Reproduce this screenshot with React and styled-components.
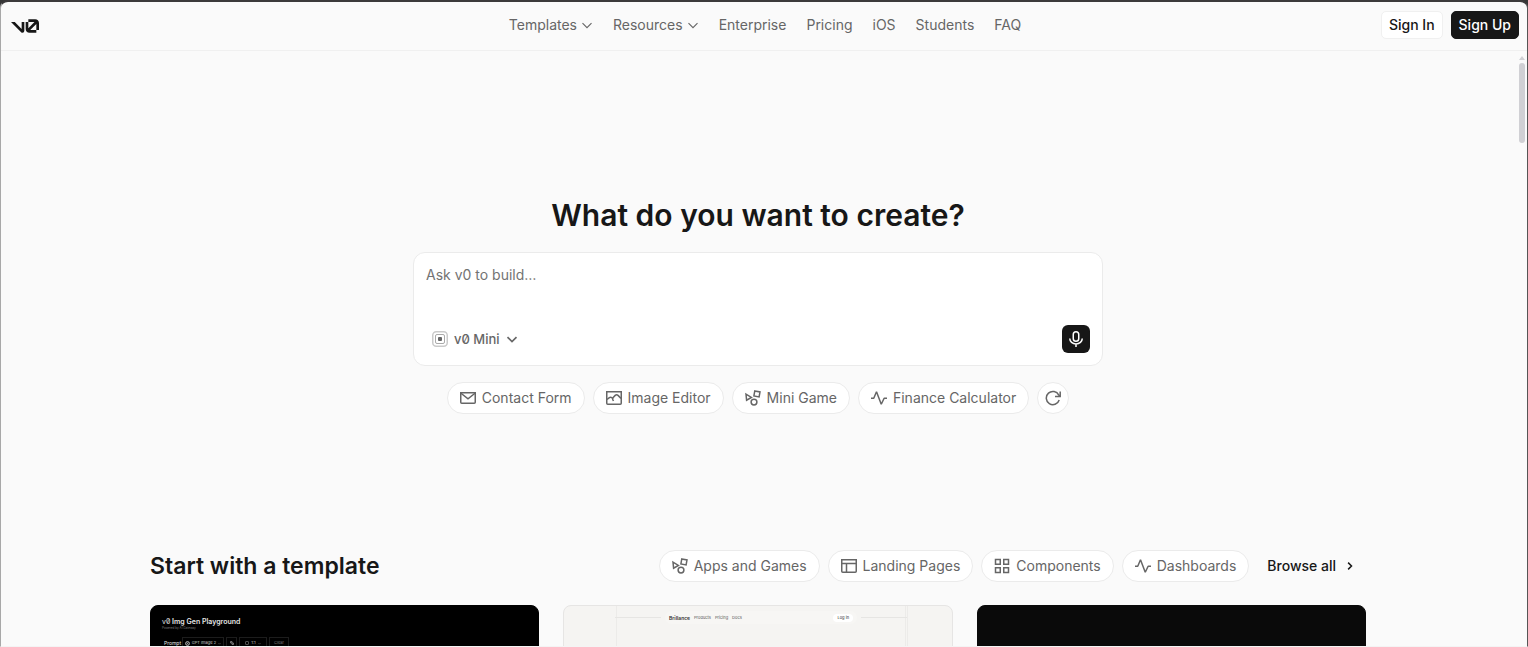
import React from 'react';
import styled, { createGlobalStyle } from 'styled-components';

const navItems = [
  { label: 'Templates', menu: true },
  { label: 'Resources', menu: true },
  { label: 'Enterprise' },
  { label: 'Pricing' },
  { label: 'iOS' },
  { label: 'Students' },
  { label: 'FAQ' },
];

const Icon = ({ size = 16, width = 1.5, children }) => (
  <svg
    width={size}
    height={size}
    viewBox="0 0 16 16"
    fill="none"
    stroke="currentColor"
    strokeWidth={width}
    aria-hidden="true"
  >
    {children}
  </svg>
);

const Logo = () => (
  <svg width="28" height="14" viewBox="0 0 147 70" fill="currentColor" aria-hidden="true">
    <path d="M56 50.2V14h14v46.16A9.84 9.84 0 0 1 60.16 70c-2.6 0-5.16-1-7-2.84L0 14h19.8L56 50.2Z" />
    <path d="M147 56h-14V23.95L100.95 56H133v14H96.69C85.81 70 77 61.19 77 50.31V14h14v32.16L123.16 14H91V0h36.31C138.19 0 147 8.81 147 19.69V56Z" />
  </svg>
);

const MailIcon = () => (
  <Icon>
    <path d="M.75 2.75h14.5v9.5a1 1 0 0 1-1 1H1.75a1 1 0 0 1-1-1v-9.5Z" />
    <path d="m1 3.25 7 5.5 7-5.5" />
  </Icon>
);

const ImageIcon = () => (
  <Icon>
    <path d="M.75 1.75h14.5v11.5a1 1 0 0 1-1 1H1.75a1 1 0 0 1-1-1V1.75Z" />
    <path d="M1 9.5 3.4 7.6a2 2 0 0 1 2.4 0L7 8.6" />
    <path d="M7.5 11 6.8 9.6a2 2 0 0 1 .4-2.2l2-2a2 2 0 0 1 2.8 0l3 3" />
  </Icon>
);

const ShapesIcon = () => (
  <Icon>
    <path d="m1 4.2.6 6 4.8-2.8L1 4.2Z" />
    <path d="m9.8.9 5.2 1-.9 5-5.2-1 .9-5Z" />
    <circle cx="9" cy="12.1" r="2.9" />
  </Icon>
);

const PulseIcon = () => (
  <Icon>
    <path d="M0 8.25h2.75L5.5 1.75l4.75 12.5 2.9-6H16" strokeLinejoin="bevel" />
  </Icon>
);

const ReloadIcon = () => (
  <Icon>
    <path d="M14.2 10a6.6 6.6 0 1 1-.4-4.9l1 1.1" />
    <path d="M15.2 1.4v5.1H10" />
  </Icon>
);

const LayoutIcon = () => (
  <Icon>
    <path d="M.75 1.75h14.5v11.5a1 1 0 0 1-1 1H1.75a1 1 0 0 1-1-1V1.75ZM1 5.5h14M5.5 5.5V14" />
  </Icon>
);

const GridIcon = () => (
  <Icon>
    <path d="M1.5 1.5h4.75v4.75H1.5zM9.75 1.5h4.75v4.75H9.75zM1.5 9.75h4.75v4.75H1.5zM9.75 9.75h4.75v4.75H9.75z" />
  </Icon>
);

const ModelIcon = () => (
  <Icon width={1}>
    <rect x=".75" y=".75" width="14.5" height="14.5" rx="3.5" strokeWidth="1.5" opacity=".35" />
    <rect x="3.5" y="3.5" width="9" height="9" rx="1.5" opacity=".55" />
    <rect x="6" y="6" width="4" height="4" rx="1" fill="currentColor" stroke="none" />
  </Icon>
);

const MicIcon = () => (
  <Icon>
    <rect x="5.25" y=".75" width="5.5" height="9.5" rx="2.75" />
    <path d="M1.75 7.5a6.25 5.5 0 0 0 12.5 0M8 13v3" />
  </Icon>
);

const ChevronDown = ({ size = 12, width = 1.5 }) => (
  <Icon size={size} width={width}>
    <path d="m2 5.5 6 6 6-6" />
  </Icon>
);

const ChevronRight = () => (
  <Icon size={12} width={2}>
    <path d="m5.5 3.5 4.5 4.5-4.5 4.5" />
  </Icon>
);

const prompts = [
  { label: 'Contact Form', icon: MailIcon },
  { label: 'Image Editor', icon: ImageIcon },
  { label: 'Mini Game', icon: ShapesIcon },
  { label: 'Finance Calculator', icon: PulseIcon },
];

const categories = [
  { label: 'Apps and Games', icon: ShapesIcon },
  { label: 'Landing Pages', icon: LayoutIcon },
  { label: 'Components', icon: GridIcon },
  { label: 'Dashboards', icon: PulseIcon },
];

const App = () => {
  return (
    <>
      <GlobalStyle />
      <Window>
        <Header>
          <LogoLink href="#" aria-label="v0">
            <Logo />
          </LogoLink>
          <Nav>
            {navItems.map((item) =>
              item.menu ? (
                <NavButton key={item.label} type="button">
                  {item.label}
                  <ChevronDown />
                </NavButton>
              ) : (
                <NavLink key={item.label} href="#">{item.label}</NavLink>
              )
            )}
          </Nav>
          <Account>
            <AccountButton type="button">Sign In</AccountButton>
            <AccountButton type="button" $dark>Sign Up</AccountButton>
          </Account>
        </Header>

        <Content>
          <Hero>
            <Title>What do you want to create?</Title>
            <PromptBox>
              <PromptInput aria-label="Prompt" placeholder="Ask v0 to build…" />
              <PromptBar>
                <ModelButton type="button">
                  <ModelIcon />
                  v0 Mini
                  <ChevronDown width={2.2} />
                </ModelButton>
                <MicButton type="button" aria-label="Dictate">
                  <MicIcon />
                </MicButton>
              </PromptBar>
            </PromptBox>
            <Pills>
              {prompts.map(({ label, icon: PillIcon }) => (
                <Pill key={label} type="button">
                  <PillIcon />
                  {label}
                </Pill>
              ))}
              <RoundButton type="button" aria-label="Refresh">
                <ReloadIcon />
              </RoundButton>
            </Pills>
          </Hero>

          <Templates>
            <TemplatesHead>
              <Subtitle>Start with a template</Subtitle>
              <Pills>
                {categories.map(({ label, icon: PillIcon }) => (
                  <Pill key={label} type="button">
                    <PillIcon />
                    {label}
                  </Pill>
                ))}
                <BrowseLink href="#">
                  Browse all
                  <ChevronRight />
                </BrowseLink>
              </Pills>
            </TemplatesHead>
            <Cards>
              <Card $bg="#000000">
                <Playground>
                  <PlayTitle><span>v0</span> Img Gen Playground</PlayTitle>
                  <PlayNote>Powered by AI Gateway</PlayNote>
                  <PlayBar>
                    <PlayLabel>Prompt</PlayLabel>
                    <PlayChip $w={42}>
                      <Icon size={5} width={3}><circle cx="8" cy="8" r="6" /><circle cx="8" cy="8" r="1" /></Icon>
                      GPT Image 2
                      <ChevronDown size={3} />
                    </PlayChip>
                    <PlayChip $w={11}>
                      <Icon size={4} width={2}><path d="M2 2h6v6H2zM8 8h6v6H8z" /></Icon>
                    </PlayChip>
                    <PlayChip $w={28}>
                      <Icon size={4}><rect x="2" y="2" width="12" height="12" rx="2" /></Icon>
                      1:1
                      <ChevronDown size={3} />
                    </PlayChip>
                    <PlayChip $w={20} $dim>Clear</PlayChip>
                  </PlayBar>
                </Playground>
              </Card>
              <Card $bg="#f5f4f2" $border="#e6e5e4">
                <Landing>
                  <Rule />
                  <LandingNav>
                    <Brand>Brillance</Brand>
                    <span>Products</span>
                    <span>Pricing</span>
                    <span>Docs</span>
                    <LoginTag>Log in</LoginTag>
                  </LandingNav>
                  <Rule />
                </Landing>
              </Card>
              <Card $bg="#0a0a0a" />
            </Cards>
          </Templates>
        </Content>
        <Scrollbar>
          <ScrollArrow />
          <ScrollThumb />
        </Scrollbar>
      </Window>
    </>
  );
};

export default App;

const GlobalStyle = createGlobalStyle`
  * {
    box-sizing: border-box;
  }

  body {
    margin: 0;
    background: #363636;
    font-family: Inter, 'Liberation Sans', sans-serif;
    font-size: 14px;
    line-height: 20px;
    color: #171717;
  }

  button, textarea {
    font: inherit;
    color: inherit;
    margin: 0;
    padding: 0;
    border: 0;
    background: none;
  }

  a {
    color: inherit;
    text-decoration: none;
  }

  h1, h2, p {
    margin: 0;
  }

  svg {
    flex-shrink: 0;
  }
`;

const Window = styled.div`
  position: relative;
  height: 100vh;
  overflow: hidden;
  background: #fafafa;
  border: 1px solid #a8a8a8;
  border-top: 2px solid #3c3a3b;
  border-right-color: #555555;
  border-bottom-color: #f4f4f4;
  border-radius: 8px 8px 0 0;
`;

const Header = styled.header`
  display: grid;
  grid-template-columns: 1fr auto 1fr;
  align-items: center;
  height: 49px;
  padding: 0 8px 2px 10px;
  border-bottom: 1px solid #f0f0f0;
`;

const LogoLink = styled.a`
  display: flex;
  padding-top: 2px;
`;

const Nav = styled.nav`
  display: flex;
  gap: 20px;
  color: #666666;
`;

const NavLink = styled.a`
  white-space: nowrap;
`;

const NavButton = styled.button`
  display: flex;
  align-items: center;
  gap: 4px;
`;

const Account = styled.div`
  display: flex;
  justify-content: flex-end;
  gap: 8px;
`;

const AccountButton = styled.button`
  height: 28px;
  padding: 0 7px;
  border: 1px solid ${(props) => (props.$dark ? '#171717' : '#f0f0f0')};
  border-radius: 5px;
  background: ${(props) => (props.$dark ? '#171717' : '#ffffff')};
  color: ${(props) => (props.$dark ? '#ffffff' : '#171717')};
  font-weight: 500;
  line-height: 18px;
`;

const Content = styled.main`
  display: flex;
  flex-direction: column;
  align-items: center;
  padding: 144px 12px 0 0;
`;

const Hero = styled.section`
  display: flex;
  flex-direction: column;
  align-items: center;
  width: 100%;
  max-width: 690px;
`;

const Title = styled.h1`
  font-size: 30px;
  line-height: 40px;
  font-weight: 600;
  margin-bottom: 17px;
`;

const PromptBox = styled.div`
  width: 100%;
  padding: 12px;
  margin-bottom: 16px;
  background: #ffffff;
  border: 1px solid #ebebeb;
  border-radius: 12px;
`;

const PromptInput = styled.textarea`
  display: block;
  width: 100%;
  height: 60px;
  resize: none;
  outline: none;

  &::placeholder {
    color: #737373;
    opacity: 1;
  }
`;

const PromptBar = styled.div`
  display: flex;
  align-items: center;
  justify-content: space-between;
`;

const ModelButton = styled.button`
  display: flex;
  align-items: center;
  gap: 6px;
  height: 28px;
  padding: 0 6px;
  color: #666666;
  font-size: 13px;
  font-weight: 500;
  font-feature-settings: 'zero';
`;

const MicButton = styled.button`
  display: flex;
  align-items: center;
  justify-content: center;
  width: 28px;
  height: 28px;
  border-radius: 6px;
  background: #171717;
  color: #ffffff;
`;

const Pills = styled.div`
  display: flex;
  gap: 8px;
`;

const Pill = styled.button`
  display: flex;
  align-items: center;
  gap: 6px;
  height: 32px;
  padding: 0 12px;
  border: 1px solid #ebebeb;
  border-radius: 16px;
  background: #ffffff;
  color: #666666;
  white-space: nowrap;
`;

const RoundButton = styled(Pill)`
  justify-content: center;
  width: 32px;
  padding: 0;
`;

const Templates = styled.section`
  width: 100%;
  max-width: 1216px;
  margin-top: 136px;
`;

const TemplatesHead = styled.div`
  display: flex;
  align-items: center;
  justify-content: space-between;
  margin-bottom: 23px;
`;

const Subtitle = styled.h2`
  font-size: 23px;
  line-height: 32px;
  font-weight: 600;
`;

const BrowseLink = styled.a`
  display: flex;
  align-items: center;
  gap: 8px;
  padding: 0 10px;
  font-weight: 500;
`;

const Cards = styled.div`
  display: grid;
  grid-template-columns: repeat(3, 1fr);
  gap: 24px;
`;

const Card = styled.article`
  height: 220px;
  overflow: hidden;
  border: 1px solid ${(props) => props.$border || props.$bg};
  border-radius: 8px;
  background: ${(props) => props.$bg};
`;

const Playground = styled.div`
  padding: 11px;
  color: #e5e5e5;
`;

const PlayTitle = styled.p`
  font-size: 7px;
  line-height: 9px;
  font-weight: 600;
  font-feature-settings: 'zero';

  span {
    font-weight: 400;
  }
`;

const PlayNote = styled.p`
  font-size: 3px;
  line-height: 5px;
  color: #777777;
`;

const PlayBar = styled.div`
  display: flex;
  gap: 2px;
  margin-top: 6px;
`;

const PlayLabel = styled.span`
  width: 18px;
  padding-left: 2px;
  font-size: 5px;
  line-height: 12px;
`;

const PlayChip = styled.span`
  display: flex;
  align-items: center;
  justify-content: center;
  gap: 2px;
  width: ${(props) => props.$w}px;
  height: 12px;
  border: 1px solid #1c1c1c;
  color: ${(props) => (props.$dim ? '#777777' : '#cccccc')};
  font-size: 4px;
  line-height: 10px;
`;

const Landing = styled.div`
  display: grid;
  grid-template-columns: 46px 192px 46px;
  justify-content: center;
  gap: 4px;
  height: 100%;
  margin: 0 44px 0 52px;
  border-left: 1px solid #ecebe9;
  border-right: 3px double #ecebe9;
`;

const Rule = styled.span`
  height: 1px;
  margin-top: 11px;
  background: #e6e5e3;
`;

const LandingNav = styled.div`
  display: flex;
  align-items: center;
  gap: 4px;
  height: 13px;
  margin-top: 5px;
  padding: 0 4px;
  border-radius: 7px;
  background: #f7f6f4;
  color: #555555;
  font-size: 4px;
  line-height: 6px;
`;

const Brand = styled.span`
  color: #333333;
  font-size: 5px;
  font-weight: 600;
`;

const LoginTag = styled.span`
  margin-left: auto;
  padding: 1px 4px;
  border-radius: 4px;
  background: #ffffff;
  color: #222222;
`;

const Scrollbar = styled.div`
  position: absolute;
  top: 54px;
  right: 2px;
  display: flex;
  flex-direction: column;
  align-items: center;
  gap: 3px;
  width: 6px;
`;

const ScrollArrow = styled.span`
  border: 3px solid transparent;
  border-top: 0;
  border-bottom: 4px solid #d0d0d4;
`;

const ScrollThumb = styled.span`
  width: 6px;
  height: 80px;
  border-radius: 3px;
  background: #d0d0d4;
`;
